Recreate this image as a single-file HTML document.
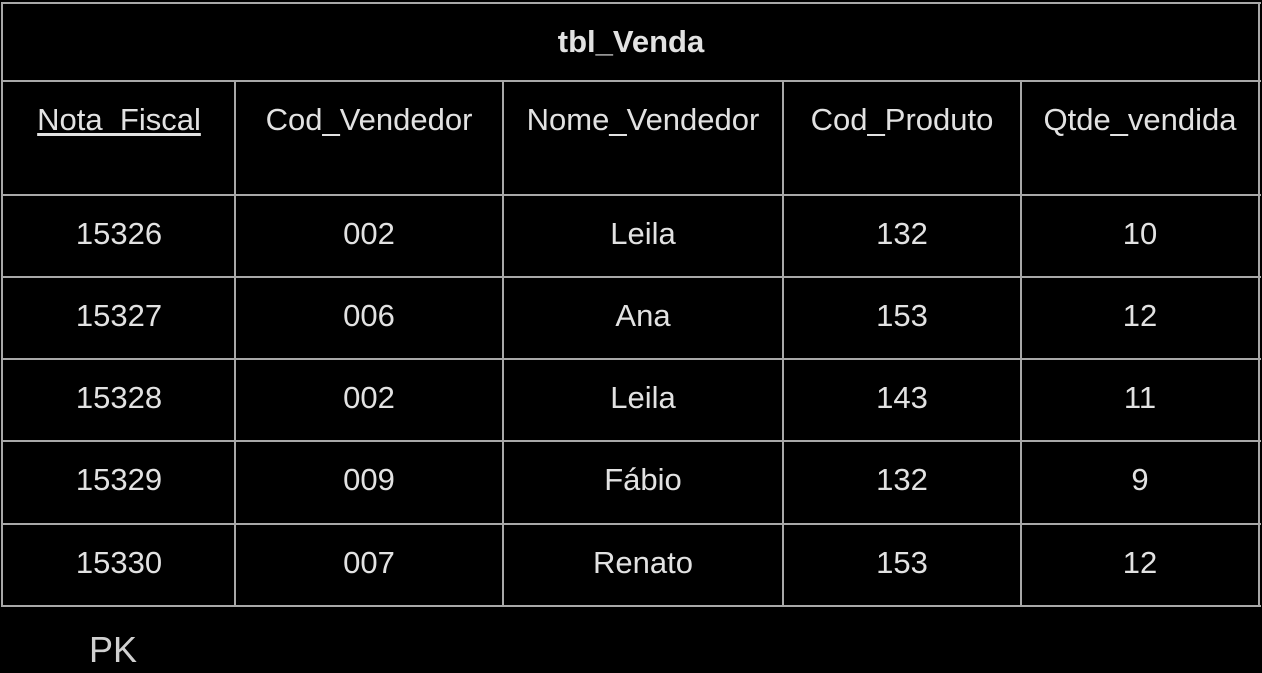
<!DOCTYPE html>
<html><head><meta charset="utf-8"><style>
html,body{margin:0;padding:0;background:#000;width:1262px;height:673px;overflow:hidden}
body{position:relative;font-family:"Liberation Sans",Arial,sans-serif;color:#e2e2e2}
.h,.v{position:absolute;background:#a8a8a8}
.h{height:2px;left:2px;width:1259px}
.v{width:2px}
.t{position:absolute;font-size:31px;line-height:36px;text-align:center;white-space:nowrap;transform:translate(-50%,-50%)}
</style></head><body>
<div class="h" style="top:2px"></div>
<div class="h" style="top:80px"></div>
<div class="h" style="top:194px"></div>
<div class="h" style="top:276px"></div>
<div class="h" style="top:358px"></div>
<div class="h" style="top:440px"></div>
<div class="h" style="top:523px"></div>
<div class="h" style="top:605px"></div>
<div class="v" style="left:1px;top:2px;height:605px"></div>
<div class="v" style="left:1258px;top:2px;height:605px"></div>
<div class="v" style="left:234px;top:80px;height:527px"></div>
<div class="v" style="left:502px;top:80px;height:527px"></div>
<div class="v" style="left:782px;top:80px;height:527px"></div>
<div class="v" style="left:1020px;top:80px;height:527px"></div>

<div class="t" style="left:631px;top:42px;font-weight:bold">tbl_Venda</div>

<div class="t" style="left:119px;top:120px;text-decoration:underline;text-underline-offset:3px">Nota_Fiscal</div>
<div class="t" style="left:369px;top:120px">Cod_Vendedor</div>
<div class="t" style="left:643px;top:120px">Nome_Vendedor</div>
<div class="t" style="left:902px;top:120px">Cod_Produto</div>
<div class="t" style="left:1140px;top:120px">Qtde_vendida</div>

<div class="t" style="left:119px;top:234px">15326</div>
<div class="t" style="left:369px;top:234px">002</div>
<div class="t" style="left:643px;top:234px">Leila</div>
<div class="t" style="left:902px;top:234px">132</div>
<div class="t" style="left:1140px;top:234px">10</div>

<div class="t" style="left:119px;top:316px">15327</div>
<div class="t" style="left:369px;top:316px">006</div>
<div class="t" style="left:643px;top:316px">Ana</div>
<div class="t" style="left:902px;top:316px">153</div>
<div class="t" style="left:1140px;top:316px">12</div>

<div class="t" style="left:119px;top:398px">15328</div>
<div class="t" style="left:369px;top:398px">002</div>
<div class="t" style="left:643px;top:398px">Leila</div>
<div class="t" style="left:902px;top:398px">143</div>
<div class="t" style="left:1140px;top:398px">11</div>

<div class="t" style="left:119px;top:480px">15329</div>
<div class="t" style="left:369px;top:480px">009</div>
<div class="t" style="left:643px;top:480px">Fábio</div>
<div class="t" style="left:902px;top:480px">132</div>
<div class="t" style="left:1140px;top:480px">9</div>

<div class="t" style="left:119px;top:563px">15330</div>
<div class="t" style="left:369px;top:563px">007</div>
<div class="t" style="left:643px;top:563px">Renato</div>
<div class="t" style="left:902px;top:563px">153</div>
<div class="t" style="left:1140px;top:563px">12</div>

<div class="t" style="left:113px;top:650px;font-size:36px;color:#d0d0d0">PK</div>
</body></html>
